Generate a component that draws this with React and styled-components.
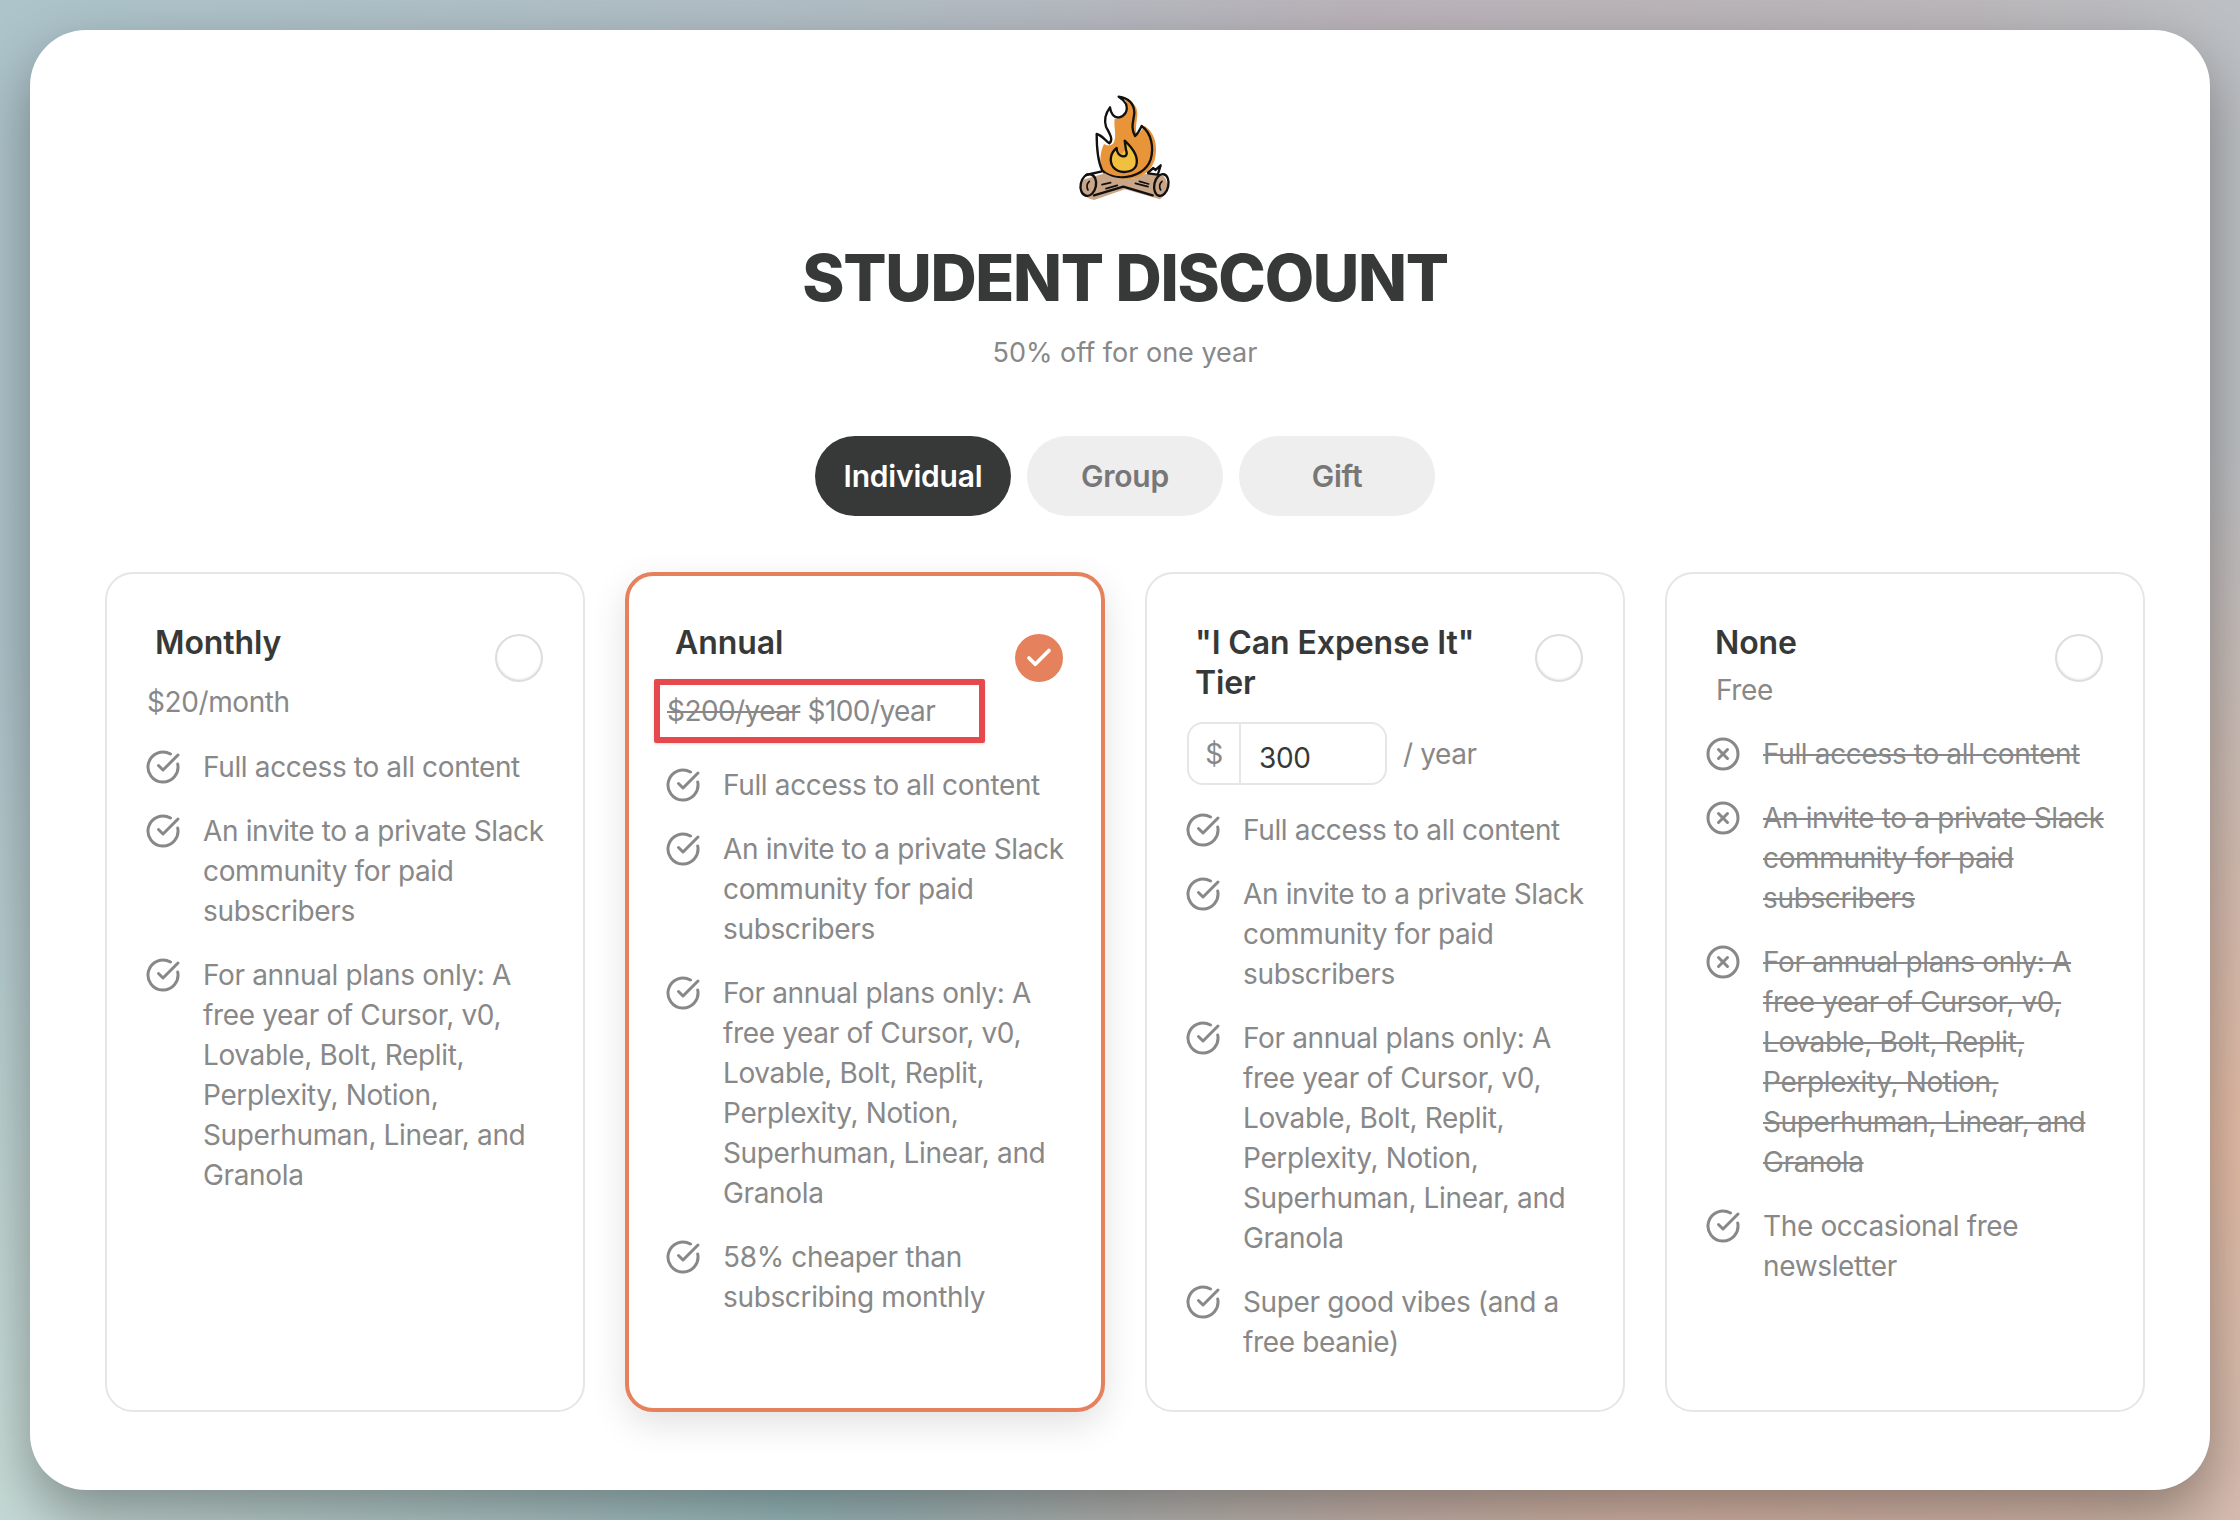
import React from "react";
import styled, { createGlobalStyle, css } from "styled-components";
import { CircleCheckBig, CircleX, Check } from "lucide-react";

const Global = createGlobalStyle`
  html, body { margin: 0; padding: 0; }
  body { font-family: Inter, "Liberation Sans", sans-serif; }
`;

const Desktop = styled.div`
  box-sizing: border-box;
  width: 2240px;
  height: 1520px;
  padding: 30px;
  background:
    radial-gradient(900px 700px at 100% 75%, #e6bda6 0%, rgba(230,189,166,0) 100%),
    radial-gradient(900px 700px at 75% 105%, #dcb9a8 0%, rgba(217,182,166,0) 100%),
    radial-gradient(900px 800px at 0% 95%, #c8dcd7 0%, rgba(200,220,215,0) 100%),
    radial-gradient(900px 500px at 35% 100%, #98bcc0 0%, rgba(152,188,192,0) 100%),
    linear-gradient(90deg, #adc4cb 0%, #b2bdc4 40%, #bbb4bb 60%, #bcb7ba 85%, #bcc0c4 100%);
`;

const Window = styled.main`
  box-sizing: border-box;
  height: 1460px;
  padding: 40px 65px 79px 75px;
  background: #fff;
  border-radius: 56px;
  box-shadow: 0 24px 60px rgba(0, 0, 0, 0.36);
  display: flex;
  flex-direction: column;
  align-items: center;
`;

const LogoArt = styled.svg`
  width: 200px;
  height: 150px;
  flex: none;
`;

const Heading = styled.h1`
  margin: 22px 0 0;
  font-size: 64px;
  line-height: 72px;
  font-weight: 800;
  letter-spacing: -1.3px;
  color: #373939;
`;

const Subtitle = styled.p`
  margin: 19px 0 0;
  font-size: 27px;
  line-height: 40px;
  color: #888;
`;

const Tabs = styled.nav`
  margin-top: 63px;
  display: flex;
  gap: 16px;
`;

const Tab = styled.button`
  width: 196px;
  height: 80px;
  border: 0;
  border-radius: 40px;
  font: 600 30px Inter, sans-serif;
  letter-spacing: -0.2px;
  background: ${(p) => (p.$active ? "#373939" : "#eee")};
  color: ${(p) => (p.$active ? "#fff" : "#777")};
`;

const Cards = styled.section`
  margin-top: 56px;
  width: 100%;
  flex: 1;
  display: grid;
  grid-template-columns: repeat(4, 480px);
  gap: 40px;
`;

const Card = styled.article`
  box-sizing: border-box;
  border-radius: 28px;
  background: #fff;
  border: 2px solid #e6e6e6;
  padding: 49px 40px 48px 37px;
  ${(p) =>
    p.$selected &&
    css`
      border: 4px solid #e5815c;
      padding: 47px 38px 46px 35px;
      box-shadow: 0 12px 36px rgba(0, 0, 0, 0.12);
    `}
`;

const Header = styled.header`
  display: flex;
  justify-content: space-between;
  align-items: flex-start;
  gap: 12px;
`;

const PlanName = styled.h2`
  margin: 0 0 0 11px;
  font-size: 32px;
  line-height: 40px;
  font-weight: 600;
  letter-spacing: -0.1px;
  color: #373939;
`;

const Radio = styled.span`
  box-sizing: border-box;
  flex: none;
  width: 48px;
  height: 48px;
  margin-top: 11px;
  border-radius: 50%;
  border: 2px solid #ddd;
  box-shadow: inset 0 -1px 2px rgba(0, 0, 0, 0.08);
  display: flex;
  align-items: center;
  justify-content: center;
  color: #fff;
  ${(p) =>
    p.$on &&
    css`
      background: #e5815c;
      border-color: #e5815c;
      box-shadow: none;
    `}
`;

const Price = styled.div`
  font-size: 28px;
  line-height: 40px;
  letter-spacing: -0.4px;
  color: #888;
  margin: ${(p) => p.$top}px 0 ${(p) => p.$bottom}px ${(p) => p.$left}px;
`;

const Struck = styled.s`
  text-decoration: line-through;
`;

const Highlight = styled.div`
  box-sizing: border-box;
  width: 331px;
  height: 64px;
  margin: -3px 0 22px -10px;
  padding: 6px 0 0 7px;
  border: 6px solid #e5484d;
  border-radius: 2px;
  box-shadow: 0 1px 3px rgba(0, 0, 0, 0.15);
  font-size: 28px;
  line-height: 40px;
  letter-spacing: -0.58px;
  color: #888;
  white-space: nowrap;
`;

const AmountRow = styled.div`
  margin: 19px 0 25px 3px;
  display: flex;
  align-items: center;
  gap: 16px;
  font-size: 28px;
  letter-spacing: -0.4px;
  color: #888;
`;

const AmountField = styled.div`
  box-sizing: border-box;
  width: 200px;
  height: 63px;
  border: 2px solid #e6e6e6;
  border-radius: 16px;
  display: flex;
  align-items: center;
`;

const Currency = styled.span`
  box-sizing: border-box;
  width: 52px;
  height: 100%;
  border-right: 2px solid #e6e6e6;
  display: flex;
  align-items: center;
  justify-content: center;
  color: #888;
`;

const AmountValue = styled.span`
  margin-left: 18px;
  margin-top: 8px;
  color: #373939;
`;

const Features = styled.ul`
  list-style: none;
  margin: 0;
  padding: 0;
  display: flex;
  flex-direction: column;
  gap: 24px;
`;

const Feature = styled.li`
  display: flex;
  gap: 22px;
  color: #888;
  font-size: 28px;
  line-height: 40px;
  letter-spacing: -0.35px;
  & > svg {
    flex: none;
    margin: 2px 0 0 1px;
    color: #888;
  }
`;

const FeatureText = styled.span`
  flex: none;
  width: 358px;
  text-decoration: ${(p) => (p.$off ? "line-through" : "none")};
`;

const FULL = "Full access to all content";
const SLACK = "An invite to a private Slack community for paid subscribers";
const TOOLS = "For annual plans only: A free year of Cursor, v0, Lovable, Bolt, Replit, Perplexity, Notion, Superhuman, Linear, and Granola";

function Item({ off, children }) {
  const Icon = off ? CircleX : CircleCheckBig;
  return (
    <Feature>
      <Icon size={36} strokeWidth={2} />
      <FeatureText $off={off}>{children}</FeatureText>
    </Feature>
  );
}

function Logo() {
  const ink = { fill: "none", stroke: "#111", strokeWidth: 7, strokeLinecap: "round", strokeLinejoin: "round" };
  return (
    <LogoArt viewBox="15 0 600 450" aria-label="campfire">
      <path d="M250 312C236 285 240 245 252 222C262 228 272 228 280 220C292 200 280 170 284 146C296 150 312 140 324 118C322 100 316 90 308 82C338 92 354 110 352 135C350 160 344 182 352 196C360 188 366 178 374 168C408 190 414 235 404 270C396 295 378 315 348 325C312 332 272 328 250 312Z" fill="#e8953a" />
      <path d="M246 300C232 270 230 235 230 192C245 195 256 212 268 220C282 210 268 190 258 170C252 150 258 128 270 112C272 130 282 145 298 142C315 138 325 122 318 102C312 92 305 85 296 80C325 84 342 100 343 128C342 150 330 172 345 198C356 190 360 178 365 168C395 190 402 232 392 268C382 298 350 322 305 322C282 322 258 315 246 300Z" {...ink} />
      <path d="M316 212C345 240 360 262 350 288C340 312 295 316 278 292C265 270 275 245 290 236C295 246 300 252 306 250C318 240 320 225 316 212Z" fill="#f0c03e" />
      <path d="M314 212C342 238 358 262 348 288C338 308 298 314 280 292C266 272 272 248 290 234C288 262 330 270 318 240Z" {...ink} />
      <path d="M186 330L255 310C275 322 300 330 345 325L375 312L422 312C452 330 445 368 420 388L315 358L222 390C180 380 172 350 186 330Z" fill="#c9a688" />
      <path d="M198 315L246 304M222 376L310 350L398 376M385 310L412 314" {...ink} />
      <path d="M384 308L400 294L406 300L422 286L414 312" {...ink} />
      <ellipse cx="205" cy="345" rx="23" ry="33" transform="rotate(12 205 345)" {...ink} />
      <ellipse cx="424" cy="345" rx="21" ry="33" transform="rotate(12 424 345)" {...ink} />
      <path d="M208 334Q196 345 204 360M426 334Q414 345 422 360M246 344L272 338M258 356L292 346M346 340L384 350M358 334L386 342" {...ink} strokeWidth={5} />
    </LogoArt>
  );
}

export default function App() {
  return (
    <>
      <Global />
      <Desktop>
        <Window>
          <Logo />
          <Heading>STUDENT DISCOUNT</Heading>
          <Subtitle>50% off for one year</Subtitle>
          <Tabs>
            <Tab $active>Individual</Tab>
            <Tab>Group</Tab>
            <Tab>Gift</Tab>
          </Tabs>
          <Cards>
            <Card>
              <Header>
                <PlanName>Monthly</PlanName>
                <Radio />
              </Header>
              <Price $top={0} $bottom={25} $left={3}>$20/month</Price>
              <Features>
                <Item>{FULL}</Item>
                <Item>{SLACK}</Item>
                <Item>{TOOLS}</Item>
              </Features>
            </Card>
            <Card $selected>
              <Header>
                <PlanName>Annual</PlanName>
                <Radio $on>
                  <Check size={30} strokeWidth={3} />
                </Radio>
              </Header>
              <Highlight>
                <Struck>$200/year</Struck> $100/year
              </Highlight>
              <Features>
                <Item>{FULL}</Item>
                <Item>{SLACK}</Item>
                <Item>{TOOLS}</Item>
                <Item>58% cheaper than subscribing monthly</Item>
              </Features>
            </Card>
            <Card>
              <Header>
                <PlanName>"I Can Expense It" Tier</PlanName>
                <Radio />
              </Header>
              <AmountRow>
                <AmountField>
                  <Currency>$</Currency>
                  <AmountValue>300</AmountValue>
                </AmountField>
                / year
              </AmountRow>
              <Features>
                <Item>{FULL}</Item>
                <Item>{SLACK}</Item>
                <Item>{TOOLS}</Item>
                <Item>Super good vibes (and a free beanie)</Item>
              </Features>
            </Card>
            <Card>
              <Header>
                <PlanName>None</PlanName>
                <Radio />
              </Header>
              <Price $top={-12} $bottom={24} $left={12}>Free</Price>
              <Features>
                <Item off>{FULL}</Item>
                <Item off>{SLACK}</Item>
                <Item off>{TOOLS}</Item>
                <Item>The occasional free newsletter</Item>
              </Features>
            </Card>
          </Cards>
        </Window>
      </Desktop>
    </>
  );
}
